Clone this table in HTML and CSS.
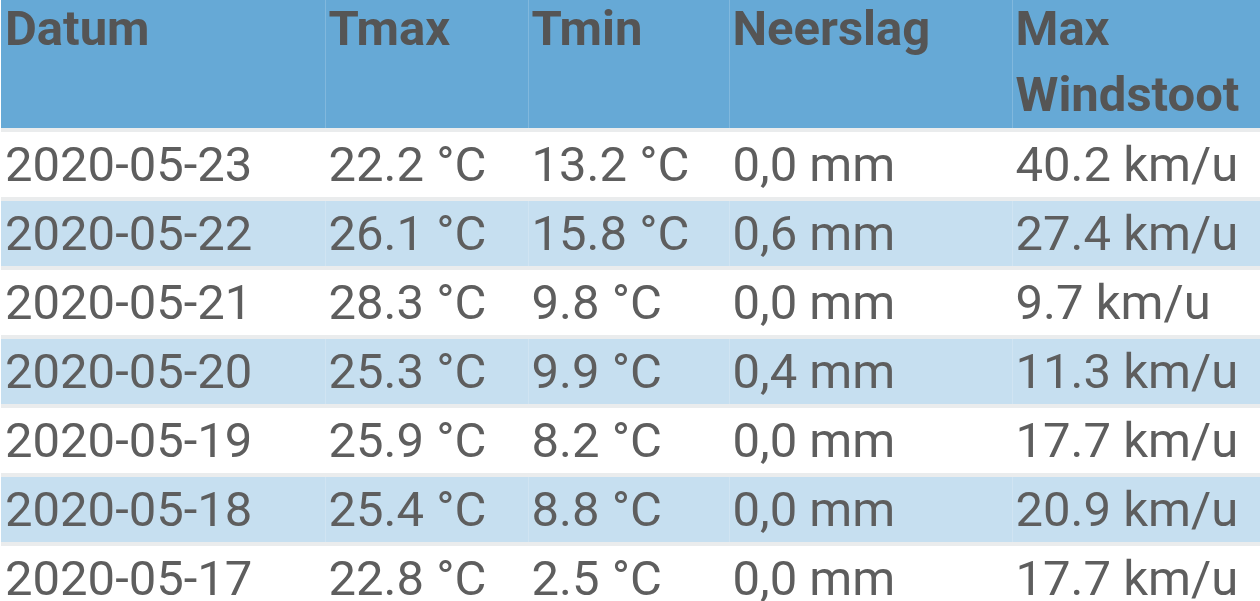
FILE: index.html
```html
<!DOCTYPE html>
<html>
<head>
    <meta charset="UTF-8">
    <meta name="viewport" content="width=device-width, initial-scale=1.0">
    <title>Weerdata</title>
    <link rel="stylesheet" href="styles.css">
</head>
<body>
    <table class="weather">
        <colgroup>
            <col class="c-date">
            <col class="c-temp">
            <col class="c-temp2">
            <col class="c-rain">
            <col class="c-wind">
        </colgroup>
        <thead>
            <tr>
                <th>Datum</th>
                <th>Tmax</th>
                <th>Tmin</th>
                <th>Neerslag</th>
                <th>Max Windstoot</th>
            </tr>
        </thead>
        <tbody>
            <tr><td>2020-05-23</td><td>22.2 °C</td><td>13.2 °C</td><td>0,0 mm</td><td>40.2 km/u</td></tr>
            <tr><td>2020-05-22</td><td>26.1 °C</td><td>15.8 °C</td><td>0,6 mm</td><td>27.4 km/u</td></tr>
            <tr><td>2020-05-21</td><td>28.3 °C</td><td>9.8 °C</td><td>0,0 mm</td><td>9.7 km/u</td></tr>
            <tr><td>2020-05-20</td><td>25.3 °C</td><td>9.9 °C</td><td>0,4 mm</td><td>11.3 km/u</td></tr>
            <tr><td>2020-05-19</td><td>25.9 °C</td><td>8.2 °C</td><td>0,0 mm</td><td>17.7 km/u</td></tr>
            <tr><td>2020-05-18</td><td>25.4 °C</td><td>8.8 °C</td><td>0,0 mm</td><td>20.9 km/u</td></tr>
            <tr><td>2020-05-17</td><td>22.8 °C</td><td>2.5 °C</td><td>0,0 mm</td><td>17.7 km/u</td></tr>
        </tbody>
    </table>
</body>
</html>
```
FILE: styles.css
```css
* { box-sizing: border-box; }
body { margin: 0; background-color: #fff; font-family: Roboto, "Liberation Sans", sans-serif; color: #5e5e5e; overflow: hidden; }
.weather { width: 1259px; margin: -4px 0 0 1px; border-collapse: collapse; table-layout: fixed; font-size: 49px; }
.c-date { width: 324px; }
.c-temp { width: 203px; }
.c-temp2 { width: 201px; }
.c-rain { width: 283px; }
.weather th { background-color: #66a9d6; color: #555; font-weight: 700; text-align: left; vertical-align: top; line-height: 66px; padding: 0 2px 0 3px; }
.weather td { line-height: 65px; padding: 0 2px 0 3px; white-space: nowrap; }
.weather th:first-child, .weather td:first-child { padding-left: 4px; }
.weather th + th, .weather td + td { border-left: 1px solid rgba(255, 255, 255, 0.18); }
.weather tbody tr { border-top: 4px solid #eaeced; background-color: #fff; }
.weather tbody tr:nth-child(even) { background-color: #c6dff0; }
```
